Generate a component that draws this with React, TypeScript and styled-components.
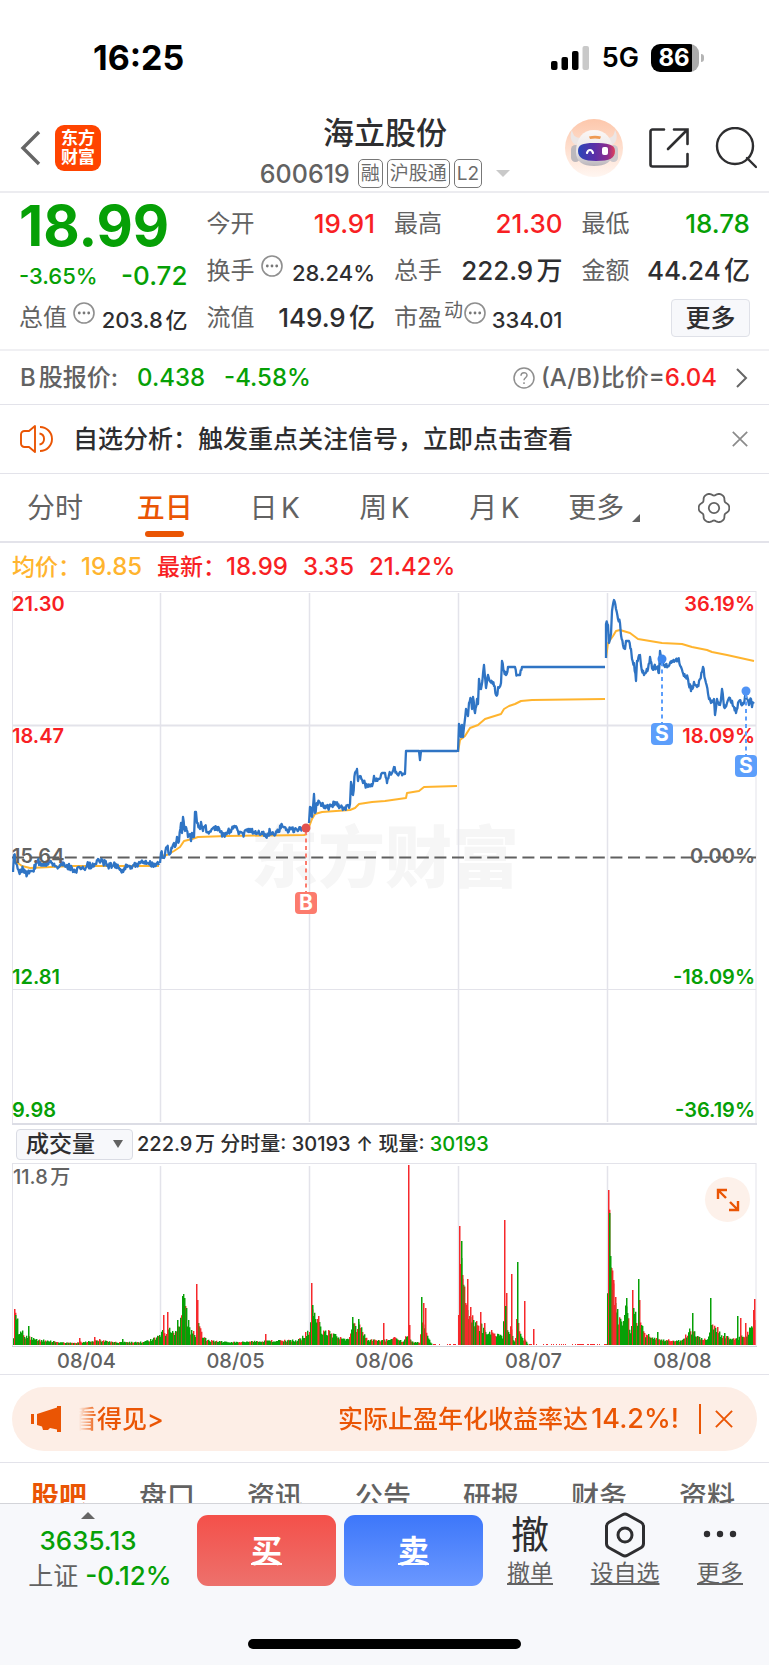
import React from "react";
import styled, { createGlobalStyle, css } from "styled-components";

const UP = "#f81f24";
const DOWN = "#06a006";
const BRAND = "#ea5504";
const AVG = "#ffb42e";
const LINE = "#2f74c4";
const INK = "#2e2e30";
const MUTED = "#626262";
const RULE = "#e3e3ea";

const GlobalStyle = createGlobalStyle`
  *, *::before, *::after { box-sizing: border-box; }
  body {
    margin: 0;
    background: #fff;
    color: ${INK};
    font-family: Inter, "Noto Sans CJK SC", sans-serif;
    font-weight: 500;
    text-autospace: normal;
  }
  button, select {
    margin: 0;
    padding: 0;
    border: 0;
    background: none;
    color: inherit;
    font: inherit;
    cursor: pointer;
    text-autospace: normal;
  }
  a { color: inherit; }
  svg { display: block; flex: none; }
`;

const Page = styled.div`
  display: flex;
  flex-direction: column;
  min-height: 100vh;
`;

/* ---------- status bar ---------- */

const StatusBar = styled.div`
  display: flex;
  align-items: center;
  justify-content: space-between;
  height: 104px;
  padding: 12px 65px 0 93px;
  color: #000;
`;

const Clock = styled.span`
  font-size: 34px;
  line-height: 40px;
  font-weight: 700;
`;

const StatusIcons = styled.div`
  display: flex;
  align-items: center;
  gap: 12px;
  font-size: 27px;
  line-height: 32px;
  font-weight: 600;
`;

const BatteryBox = styled.span`
  display: flex;
  align-items: center;
  gap: 2px;
  &::after {
    content: "";
    width: 3px;
    height: 8px;
    border-radius: 0 3px 3px 0;
    background: #b4b4b4;
  }
`;

const BatteryBody = styled.span`
  width: 48px;
  height: 28px;
  padding-right: 2px;
  border-radius: 9px;
  background: linear-gradient(90deg, #000 86%, #ababab 86%);
  color: #fff;
  font-size: 24px;
  line-height: 28px;
  font-weight: 700;
  text-align: center;
`;

/* ---------- header ---------- */

const Header = styled.header`
  display: grid;
  grid-template-columns: 1fr auto 1fr;
  align-items: center;
  height: 89px;
  padding: 0 12px 0 13px;
  border-bottom: 2px solid #ececf0;
`;

const HeaderSide = styled.div<{ $end?: boolean }>`
  display: flex;
  align-items: center;
  gap: ${(p) => (p.$end ? 25 : 14)}px;
  padding-left: ${(p) => (p.$end ? 0 : 7)}px;
  justify-content: ${(p) => (p.$end ? "flex-end" : "flex-start")};
`;

const Logo = styled.span`
  display: grid;
  place-content: center;
  width: 46px;
  height: 46px;
  border-radius: 9px;
  background: #ff4400;
  color: #fff;
  font-size: 17px;
  line-height: 19px;
  font-weight: 700;
`;

const TitleBlock = styled.div`
  display: flex;
  flex-direction: column;
  align-items: center;
  gap: 5px;
  padding-top: 7px;
`;

const Title = styled.h1`
  margin: 0;
  font-size: 31px;
  line-height: 40px;
  font-weight: 500;
`;

const CodeRow = styled.div`
  display: flex;
  align-items: center;
  gap: 4px;
  height: 32px;
  color: ${MUTED};
  font-size: 25px;
`;

const Tag = styled.span`
  height: 29px;
  padding: 0 2px;
  border: 1px solid #777;
  border-radius: 5px;
  color: #6b6b6b;
  font-size: 19px;
  line-height: 27px;
  font-weight: 400;
`;

const CodeText = styled.span`
  margin-right: 4px;
`;

const Triangle = styled.span<{ $up?: boolean; $color: string; $size: number }>`
  display: block;
  width: 0;
  height: 0;
  border: ${(p) => p.$size}px solid transparent;
  ${(p) =>
    p.$up
      ? css`border-top: 0; border-bottom-color: ${p.$color};`
      : css`border-bottom: 0; border-top-color: ${p.$color};`}
`;

const CodeMenu = styled.button`
  padding-left: 10px;
`;

/* ---------- quote ---------- */

const Quote = styled.section`
  display: grid;
  grid-template-columns: repeat(4, 1fr);
  grid-auto-rows: 47px;
  column-gap: 19px;
  padding: 7px 19px 8px;
  border-bottom: 2px solid #f0f0f3;
`;

const Cell = styled.div`
  display: flex;
  align-items: center;
  justify-content: space-between;
  white-space: nowrap;
`;

const Price = styled.strong`
  padding-top: 5px;
  color: ${DOWN};
  font-size: 56px;
  line-height: 47px;
  font-weight: 700;
`;

const Label = styled.span`
  color: ${MUTED};
  font-size: 24px;
  line-height: 36px;
  font-weight: 400;
`;

const LabelGroup = styled.span`
  display: flex;
  align-items: center;
`;

const RaisedIcon = styled.span<{ $gap: number }>`
  padding: 0 0 10px ${(p) => p.$gap}px;
`;

const Mode = styled.span`
  padding: 0 0 14px 2px;
  color: ${MUTED};
  font-size: 19px;
  line-height: 24px;
  font-weight: 400;
`;

const Value = styled.span<{ $color?: string; $small?: boolean }>`
  color: ${(p) => p.$color ?? INK};
  font-size: ${(p) => (p.$small ? 22 : 26)}px;
  line-height: 32px;
  padding-top: ${(p) => (p.$small ? 4 : 0)}px;
`;

const ChangeCell = styled(Cell)`
  padding-top: 10px;
  ${Value} { padding-top: 0; }
`;

const MoreButton = styled.button`
  justify-self: end;
  align-self: center;
  width: 79px;
  height: 38px;
  border: 1px solid #dfe1e8;
  border-radius: 4px;
  background: #f7f8fb;
  font-size: 25px;
  line-height: 34px;
`;

/* ---------- B share and notice rows ---------- */

const Strip = styled.div<{ $height: number }>`
  display: flex;
  align-items: center;
  height: ${(p) => p.$height}px;
  padding: 0 21px 0 20px;
  border-bottom: 1px solid ${RULE};
  white-space: nowrap;
`;

const Tone = styled.span<{ $color: string; $weight?: number }>`
  color: ${(p) => p.$color};
  font-weight: ${(p) => p.$weight ?? 500};
`;

const BShare = styled(Strip)`
  gap: 19px;
  color: ${MUTED};
  font-size: 24px;
  line-height: 32px;
`;

const Ratio = styled.a`
  display: flex;
  align-items: center;
  margin-left: auto;
  text-decoration: none;
`;

const RatioText = styled.span`
  margin: 0 19px 0 6px;
`;

const NoticeText = styled.p`
  flex: 1;
  margin: 0 0 0 20px;
  font-size: 25px;
  line-height: 36px;
`;

/* ---------- period tabs ---------- */

const Tabs = styled.nav`
  display: grid;
  grid-template-columns: repeat(7, 1fr);
  height: 69px;
  border-bottom: 2px solid ${RULE};
`;

const Tab = styled.button<{ $active?: boolean }>`
  position: relative;
  display: flex;
  align-items: center;
  justify-content: center;
  color: ${(p) => (p.$active ? BRAND : MUTED)};
  font-size: 28px;
  line-height: 40px;
  font-weight: ${(p) => (p.$active ? 500 : 400)};
  &::after {
    content: ${(p) => (p.$active ? '""' : "none")};
    position: absolute;
    bottom: 4px;
    width: 39px;
    height: 6px;
    border-radius: 3px;
    background: ${BRAND};
  }
`;

const Corner = styled.svg`
  align-self: flex-end;
  margin: 0 0 19px 8px;
`;

/* ---------- charts ---------- */

const Readout = styled.div`
  display: flex;
  align-items: center;
  gap: 15px;
  height: 48px;
  padding: 0 12px;
  color: ${UP};
  font-size: 23px;
  line-height: 32px;
  white-space: pre;
`;

const Num = styled.span`
  font-size: 24px;
`;

const ChartArea = styled.div`
  position: relative;
  padding: 0 12px;
`;

const ChartSvg = styled.svg`
  width: 100%;
  height: auto;
  font-family: Inter, "Noto Sans CJK SC", sans-serif;
`;

const VolumeBar = styled.div`
  display: flex;
  align-items: center;
  gap: 4px;
  height: 38px;
  padding: 0 16px;
  font-size: 20px;
  line-height: 28px;
  white-space: pre;
`;

const SelectBox = styled.label`
  position: relative;
  display: flex;
  align-items: center;
`;

const Select = styled.select`
  appearance: none;
  width: 117px;
  height: 31px;
  padding-left: 9px;
  border: 1px solid #dadce4;
  border-radius: 4px;
  background: #f7f8fb;
  font-size: 23px;
  line-height: 29px;
`;

const SelectArrow = styled.svg`
  position: absolute;
  right: 10px;
  pointer-events: none;
`;

const ExpandButton = styled.button`
  position: absolute;
  top: 14px;
  right: 19px;
  display: grid;
  place-items: center;
  width: 45px;
  height: 45px;
  border-radius: 50%;
  background: #fdf1ea;
`;

const Dates = styled.div`
  display: grid;
  grid-template-columns: repeat(5, 1fr);
  height: 28px;
  padding: 0 12px;
  border-bottom: 1px solid ${RULE};
  color: ${MUTED};
  font-size: 20px;
  line-height: 28px;
  text-align: center;
`;

/* ---------- promo ---------- */

const PromoWrap = styled.div`
  padding: 12px 12px 11px;
  border-bottom: 1px solid ${RULE};
`;

const Promo = styled.div`
  display: flex;
  align-items: center;
  height: 64px;
  padding: 0 24px 0 19px;
  border-radius: 32px;
  background: #fdeee6;
  color: ${BRAND};
  font-size: 25px;
  line-height: 36px;
`;

const Marquee = styled.div`
  display: flex;
  flex: 1;
  align-items: center;
  justify-content: space-between;
  margin: 0 20px 0 18px;
  overflow: hidden;
  white-space: nowrap;
  mask-image: linear-gradient(90deg, transparent, #000 18px);
`;

const Tail = styled.span`
  margin-left: -7px;
`;

const Rate = styled.span`
  font-size: 27px;
`;

const PromoClose = styled.button`
  display: flex;
  align-items: center;
  height: 30px;
  padding-left: 14px;
  border-left: 2px solid ${BRAND};
`;

/* ---------- section tabs ---------- */

const SectionTabs = styled.nav`
  display: grid;
  grid-template-columns: repeat(7, 1fr);
  height: 40px;
  padding: 0 8px 0 5px;
  overflow: hidden;
`;

const SectionTab = styled.button<{ $active?: boolean }>`
  height: 68px;
  color: ${(p) => (p.$active ? BRAND : MUTED)};
  font-size: 28px;
  line-height: 68px;
  font-weight: ${(p) => (p.$active ? 700 : 500)};
`;

/* ---------- bottom bar ---------- */

const Footer = styled.footer`
  flex: 1;
  display: flex;
  flex-direction: column;
  justify-content: space-between;
  border-top: 1px solid #d3d4d9;
  background: #f7f8fb;
`;

const Actions = styled.div`
  display: flex;
  align-items: flex-start;
  gap: 8px;
  padding: 8px 10px 0 21px;
`;

const IndexBox = styled.button`
  flex: none;
  display: flex;
  flex-direction: column;
  align-items: center;
  width: 168px;
  padding-right: 10px;
  color: ${MUTED};
  font-size: 25px;
  line-height: 35px;
  white-space: pre;
`;

const IndexName = styled.span`
  font-weight: 400;
`;

const IndexNum = styled(Tone)`
  font-size: 26px;
`;

const IndexValue = styled(IndexNum)`
  padding-top: 4px;
  margin-right: 24px;
`;

const IndexCaret = styled(Triangle)`
  margin-right: 24px;
`;

const Trade = styled.button<{ $from: string; $to: string }>`
  flex: 1;
  height: 71px;
  margin-top: 3px;
  border-radius: 11px;
  background: linear-gradient(${(p) => p.$from}, ${(p) => p.$to});
  color: #fff;
  font-size: 31px;
  line-height: 71px;
  font-weight: 700;
  text-decoration: underline;
  text-decoration-thickness: 2px;
`;

const Tool = styled.button<{ $width: number }>`
  flex: none;
  display: flex;
  flex-direction: column;
  align-items: center;
  width: ${(p) => p.$width}px;
  color: ${MUTED};
  font-size: 23px;
  line-height: 34px;
  font-weight: 400;
`;

const ToolIcon = styled.span`
  display: grid;
  place-items: center;
  height: 44px;
  color: ${INK};
  font-size: 38px;
  line-height: 44px;
`;

const ToolLabel = styled.span`
  text-decoration: underline;
`;

const HomeIndicator = styled.div`
  align-self: center;
  width: 35.5%;
  height: 10px;
  margin-bottom: 16px;
  border-radius: 5px;
  background: #000;
`;

/* ---------- chart data ---------- */

type Pt = [number, number];

const priceDays: Pt[][] = [
  [[1, 281], [2, 264], [5, 274], [7, 281], [11, 278], [15, 284], [18, 280], [21, 280], [25, 270], [30, 273], [38, 271], [45, 276], [50, 273], [60, 277], [61, 281], [68, 277], [73, 279], [75, 274], [80, 275], [86, 268], [91, 271], [96, 275], [105, 274], [109, 280], [115, 276], [125, 273], [131, 272], [147, 274]],
  [[148, 272], [149, 262], [152, 267], [155, 256], [158, 263], [162, 252], [163, 256], [165, 246], [167, 250], [169, 232], [170, 242], [171, 226], [173, 240], [174, 236], [176, 246], [178, 243], [179, 250], [180, 242], [182, 246], [183, 221], [184, 221], [185, 232], [188, 238], [189, 231], [191, 240], [193, 236], [196, 241], [200, 238], [205, 236], [208, 241], [212, 244], [216, 240], [219, 241], [222, 235], [226, 240], [232, 243], [238, 238], [242, 241], [246, 242], [250, 241], [254, 246], [258, 240], [262, 244], [266, 241], [270, 234], [274, 239], [280, 238], [286, 240], [290, 237], [294, 237]],
  [[297, 232], [298, 216], [300, 226], [302, 203], [303, 222], [305, 212], [310, 214], [316, 217], [320, 214], [323, 211], [328, 216], [333, 218], [338, 213], [339, 191], [341, 204], [343, 182], [345, 178], [346, 190], [348, 185], [351, 192], [353, 193], [356, 196], [358, 194], [361, 192], [362, 185], [364, 190], [367, 188], [370, 182], [373, 182], [375, 192], [377, 184], [380, 182], [382, 176], [385, 183], [388, 181], [393, 183], [394, 160], [407, 160], [408, 169], [409, 160], [445, 160]],
  [[446, 161], [447, 133], [449, 146], [450, 134], [451, 146], [452, 136], [454, 118], [456, 125], [457, 112], [459, 108], [460, 118], [461, 106], [463, 122], [465, 108], [466, 113], [467, 88], [469, 98], [472, 74], [474, 97], [476, 84], [480, 91], [482, 95], [484, 104], [487, 97], [489, 92], [490, 70], [492, 80], [494, 84], [496, 76], [503, 76], [505, 84], [508, 84], [510, 76], [593, 76]],
  [[594, 67], [594, 33], [596, 34], [597, 52], [599, 43], [600, 20], [602, 9], [604, 18], [606, 28], [608, 32], [609, 44], [611, 54], [613, 58], [614, 50], [617, 50], [619, 58], [620, 68], [622, 72], [624, 90], [625, 70], [628, 64], [629, 74], [632, 84], [636, 78], [638, 66], [640, 77], [645, 76], [647, 82], [648, 60], [650, 74], [653, 76], [658, 72], [663, 70], [666, 68], [669, 76], [673, 86], [676, 88], [679, 100], [682, 91], [685, 96], [688, 88], [691, 76], [694, 92], [697, 108], [699, 112], [702, 108], [703, 124], [705, 108], [708, 114], [710, 98], [712, 116], [715, 112], [718, 107], [722, 116], [724, 122], [727, 110], [731, 112], [734, 104], [737, 114], [739, 108], [740, 116], [742, 111]],
];

const averageDays: Pt[][] = [
  [[3, 270], [10, 275], [18, 277], [60, 275], [147, 275]],
  [[149, 265], [155, 264], [162, 260], [168, 256], [172, 250], [180, 248], [186, 246], [215, 245], [292, 244], [295, 243]],
  [[297, 236], [300, 228], [303, 223], [310, 221], [338, 219], [343, 217], [347, 213], [360, 211], [373, 210], [394, 207], [395, 202], [407, 200], [412, 196], [445, 195]],
  [[446, 161], [448, 149], [453, 145], [458, 137], [466, 134], [473, 128], [489, 123], [492, 118], [497, 115], [503, 113], [509, 110], [520, 109], [593, 108]],
  [[594, 67], [596, 52], [601, 45], [604, 40], [608, 39], [618, 42], [626, 48], [650, 52], [670, 53], [680, 56], [695, 59], [700, 61], [715, 64], [742, 70]],
];

function makeRandom(seed: number) {
  let s = seed;
  return () => {
    s = (s * 16807) % 2147483647;
    return s / 2147483647;
  };
}

function join(points: Pt[]) {
  return points.map(([x, y]) => `${x.toFixed(1)},${y.toFixed(1)}`).join(" ");
}

/* Adds minute-by-minute movement between the turning points; flat runs stay flat. */
function withTicks(points: Pt[], seed: number): Pt[] {
  const random = makeRandom(seed);
  const out: Pt[] = [points[0]];
  for (let i = 1; i < points.length; i++) {
    const [x0, y0] = points[i - 1];
    const [x1, y1] = points[i];
    if (y0 !== y1) {
      for (let x = x0 + 0.7; x < x1 - 0.3; x += 0.7) {
        const t = (x - x0) / (x1 - x0);
        out.push([x, y0 + (y1 - y0) * t + (random() - 0.5) * 6]);
      }
    }
    out.push([x1, y1]);
  }
  return out;
}

const volumeEnvelope: Pt[] = [
  [1, 10], [2, 35], [5, 28], [6, 14], [9, 16], [12, 8], [15, 9], [20, 7], [30, 5], [45, 3], [60, 2], [85, 5], [100, 3], [130, 3], [143, 7], [147, 14],
  [148, 12], [150, 22], [152, 14], [155, 14], [158, 17], [162, 12], [167, 22], [170, 32], [171, 46], [173, 44], [175, 28], [178, 15], [182, 12], [184, 12], [186, 22], [189, 12], [194, 5], [215, 3], [250, 4], [285, 5], [290, 8], [296, 15],
  [297, 16], [300, 42], [303, 32], [306, 24], [309, 16], [316, 13], [322, 10], [330, 6], [337, 7], [341, 28], [344, 15], [347, 26], [350, 12], [356, 5], [373, 5], [380, 8], [390, 4], [395, 10], [400, 3], [407, 3], [410, 26], [413, 15], [418, 3], [420, 0], [445, 0],
  [446, 30], [449, 95], [451, 66], [453, 42], [456, 28], [460, 32], [463, 26], [468, 20], [472, 16], [478, 14], [482, 12], [490, 8], [492, 34], [495, 16], [498, 17], [502, 4], [506, 22], [510, 8], [514, 3], [516, 0], [594, 0],
  [595, 45], [597, 120], [598, 94], [600, 66], [602, 44], [604, 50], [606, 30], [610, 24], [614, 38], [618, 14], [622, 34], [626, 20], [628, 28], [632, 12], [640, 8], [650, 5], [668, 5], [678, 16], [685, 9], [695, 7], [700, 20], [705, 13], [715, 8], [725, 7], [735, 12], [743, 28],
];

const volumeSpikes: [number, number, "u" | "d"][] = [
  [2, 36, "u"], [3, 30, "d"], [16, 19, "d"], [67, 7, "u"], [82, 8, "u"], [87, 6, "u"], [110, 6, "d"],
  [151, 30, "u"], [155, 33, "u"], [165, 25, "d"], [170, 49, "d"], [172, 47, "d"], [184, 61, "u"], [185, 45, "u"], [253, 11, "u"],
  [299, 62, "u"], [300, 40, "d"], [306, 29, "u"], [316, 15, "u"], [340, 28, "d"], [346, 26, "d"], [371, 22, "u"],
  [396, 180, "u"], [397, 20, "u"], [409, 48, "d"], [411, 42, "u"], [413, 37, "u"],
  [447, 119, "u"], [449, 104, "d"], [450, 70, "u"], [453, 42, "u"], [455, 66, "u"], [458, 38, "u"], [468, 33, "u"], [472, 22, "u"],
  [492, 125, "u"], [493, 39, "d"], [494, 52, "u"], [499, 71, "u"], [504, 26, "u"], [505, 83, "d"], [512, 44, "u"], [521, 16, "u"],
  [596, 155, "u"], [597, 132, "d"], [598, 89, "d"], [599, 77, "u"], [601, 65, "u"], [603, 48, "u"], [614, 47, "d"], [620, 55, "u"],
  [621, 37, "d"], [626, 66, "d"], [627, 45, "u"], [645, 13, "d"], [680, 32, "d"], [698, 47, "d"], [705, 18, "u"], [712, 12, "d"],
  [725, 29, "d"], [728, 27, "u"], [733, 22, "u"], [741, 35, "u"], [742, 46, "u"],
];

/* Bars are slightly wider than their step so that neighbours touch; spikes go on top. */
function volumePaths() {
  const random = makeRandom(4217);
  const paths = { u: "", d: "", spikeU: "", spikeD: "" };
  const base = 182;
  let i = 1;
  for (let x = 1; x <= 742; x++) {
    while (i < volumeEnvelope.length - 1 && volumeEnvelope[i][0] < x) i++;
    const [x0, h0] = volumeEnvelope[i - 1];
    const [x1, h1] = volumeEnvelope[i];
    const level = h0 + ((h1 - h0) * (x - x0)) / (x1 - x0 || 1);
    const roll = random();
    const side = random() < 0.36 ? "u" : "d";
    if (level < 0.5) {
      if (roll < 0.4) paths.u += `M${x} ${base}v-1h1v1z`;
      continue;
    }
    const height = Math.max(1, level * (0.65 + roll * 0.5)).toFixed(1);
    paths[side] += `M${x} ${base}v-${height}h1.4v${height}z`;
  }
  for (const [x, h, side] of volumeSpikes) {
    paths[side === "u" ? "spikeU" : "spikeD"] += `M${x} ${base}v-${h}h1.5v${h}z`;
  }
  return paths;
}

const volume = volumePaths();
const dividers = [148, 297, 446, 595];

/* ---------- small drawings ---------- */

function gearOutline() {
  const points: Pt[] = [];
  for (let i = 0; i < 120; i++) {
    const a = (i / 120) * Math.PI * 2;
    const wave = Math.cos(6 * a);
    const r = 13.6 + 1.3 * wave - 0.5 * wave * wave;
    points.push([16 + r * 1.06 * Math.cos(a), 16 + r * 1.06 * Math.sin(a)]);
  }
  return join(points);
}

const MoreDots = () => (
  <svg width="22" height="22" viewBox="0 0 22 22" fill="none" stroke="#8f8f8f" strokeWidth="1.6">
    <circle cx="11" cy="11" r="10" />
    <g fill="#777" stroke="none">
      <circle cx="6.3" cy="11" r="1.4" />
      <circle cx="11" cy="11" r="1.4" />
      <circle cx="15.7" cy="11" r="1.4" />
    </g>
  </svg>
);

const Cross = ({ size, color }: { size: number; color: string }) => (
  <svg width={size} height={size} viewBox="0 0 16 16" stroke={color} strokeWidth="1.7" fill="none">
    <path d="M.8.8 15.2 15.2M15.2.8.8 15.2" />
  </svg>
);

const Robot = () => (
  <svg width="58" height="58" viewBox="0 0 58 58">
    <defs>
      <linearGradient id="robotBack" x1="0" y1="0" x2="0" y2="1">
        <stop offset="0" stopColor="#fdc7ab" />
        <stop offset="1" stopColor="#fff6f1" />
      </linearGradient>
      <linearGradient id="robotShell" x1="0" y1="0" x2="0" y2="1">
        <stop offset="0" stopColor="#fbf7f5" />
        <stop offset=".6" stopColor="#eae6e7" />
        <stop offset="1" stopColor="#b9b4ba" />
      </linearGradient>
      <linearGradient id="robotFace" x1="0" y1="0" x2="1" y2="0">
        <stop offset="0" stopColor="#2a46b8" />
        <stop offset=".45" stopColor="#5a2fa8" />
        <stop offset=".8" stopColor="#8b2d8e" />
        <stop offset="1" stopColor="#e2405a" />
      </linearGradient>
    </defs>
    <circle cx="29" cy="29" r="29" fill="url(#robotBack)" />
    <path d="M7 11c1 5 3 8 9 8l-5 7c-5-2-7-10-4-15zM50 11c-1 5-2 8-8 8l5 7c5-2 6-10 3-15z" fill="#ece6e5" />
    <rect x="6" y="26" width="9" height="17" rx="4.5" fill="#bdb9bd" />
    <rect x="44" y="26" width="9" height="17" rx="4.5" fill="#cdc9cd" />
    <path d="M11 33c0-14 7-22 18-22s19 8 19 22c0 10-8 14-19 14s-18-4-18-14z" fill="url(#robotShell)" />
    <path d="M24 17.5q6-1.5 12 0l-1 2.5q-5-1-10 0z" fill="#ee9a52" />
    <path d="M13 32c0-6 4-8 16-8 13 0 21 1 21 8s-5 10-19 10c-12 0-18-3-18-10z" fill="url(#robotFace)" />
    <path d="M22 34c1-4 5-4 6 0" fill="none" stroke="#fff" strokeWidth="2.2" strokeLinecap="round" />
    <rect x="37" y="28" width="6" height="8" rx="2" fill="#fff" />
  </svg>
);

const Badge = ({ x, y, color, dot, mark }: { x: number; y: number; color: string; dot: string; mark: string }) => (
  <g>
    <path d={`M${x} ${y + 3}v61`} stroke={color} strokeWidth="2" strokeDasharray="4 3.5" />
    <circle cx={x} cy={y} r="4.5" fill={dot} />
    <rect x={x - 11} y={y + 64} width="22" height="22" rx="4" fill={color} />
    <text x={x} y={y + 82} textAnchor="middle" fill="#fff" fontSize="21" fontWeight="700">
      {mark}
    </text>
  </g>
);

const axisLabels: [number, string, string, string][] = [
  [20, "21.30", "36.19%", UP],
  [152, "18.47", "18.09%", UP],
  [272, "15.64", "0.00%", MUTED],
  [393, "12.81", "-18.09%", DOWN],
  [526, "9.98", "-36.19%", DOWN],
];

const PriceChart = () => (
  <ChartSvg viewBox="0 0 745 534" role="img" aria-label="五日走势">
    <text x="373" y="291" textAnchor="middle" fill="#f6f6f6" fontSize="67" fontWeight="900">
      东方财富
    </text>
    <g stroke={RULE} fill="none">
      <path d="M0 .5H744" />
      <path d="M.5 0V533M744 0V533" />
      <path d="M0 134.5H744" strokeWidth="2" />
      <path d="M0 398.5H744" />
      <path d="M0 533H745" strokeWidth="2" stroke="#dcdde5" />
      {dividers.map((x) => (
        <path key={x} d={`M${x + 0.5} 2V531`} strokeWidth="1.5" />
      ))}
    </g>
    <path d="M0 266.5H744" stroke="#606060" strokeWidth="2" strokeDasharray="12 5.6" />
    <g fill="none" stroke={AVG} strokeWidth="2" strokeLinejoin="round">
      {averageDays.map((day, i) => (
        <polyline key={i} points={join(day)} />
      ))}
    </g>
    <g fill="none" stroke={LINE} strokeWidth="2.3" strokeLinejoin="round">
      {priceDays.map((day, i) => (
        <polyline key={i} points={join(withTicks(day, 91 + i * 37))} />
      ))}
    </g>
    <g fontSize="20" fontWeight="600">
      {axisLabels.map(([y, left, right, color]) => (
        <g key={y} fill={color}>
          <text x="0" y={y}>{left}</text>
          <text x="743" y={y} textAnchor="end">{right}</text>
        </g>
      ))}
    </g>
    <Badge x={294} y={237} color="#fc7b6d" dot="#e2524d" mark="B" />
    <Badge x={650} y={68} color="#5c9efb" dot="#3d86ee" mark="S" />
    <Badge x={734} y={100} color="#5c9efb" dot="#4f93f5" mark="S" />
  </ChartSvg>
);

const VolumeChart = () => (
  <ChartSvg viewBox="0 0 745 184" role="img" aria-label="成交量">
    <g stroke={RULE} fill="none">
      <path d="M0 .5H744" />
      <path d="M.5 0V183M744 0V183" />
      <path d="M0 183.5H745" stroke="#cfd0d8" />
      {dividers.map((x) => (
        <path key={x} d={`M${x + 0.5} 3V182`} strokeWidth="1.5" />
      ))}
    </g>
    <path d={volume.u} fill="#f6292c" />
    <path d={volume.d} fill="#06a006" />
    <path d={volume.spikeU} fill="#f6292c" />
    <path d={volume.spikeD} fill="#06a006" />
    <text x="1" y="21" fill={MUTED} fontSize="20" fontWeight="500">11.8万</text>
  </ChartSvg>
);

/* ---------- page ---------- */

export default function App() {
  return (
    <Page>
      <GlobalStyle />
      <StatusBar>
        <Clock>16:25</Clock>
        <StatusIcons>
          <svg width="39" height="26" viewBox="0 0 39 26">
            <rect x="0" y="16" width="6.5" height="9" rx="2" />
            <rect x="10.5" y="12" width="6.5" height="13" rx="2" />
            <rect x="21" y="6" width="6.5" height="19" rx="2" />
            <rect x="31.5" y="1" width="6.5" height="24" rx="2" fill="#c9c9c9" />
          </svg>
          <span>5G</span>
          <BatteryBox>
            <BatteryBody>86</BatteryBody>
          </BatteryBox>
        </StatusIcons>
      </StatusBar>

      <Header>
        <HeaderSide>
          <button aria-label="返回">
            <svg width="21" height="36" viewBox="0 0 21 36" fill="none" stroke="#666" strokeWidth="3.4">
              <path d="M19 2 3 18l16 16" />
            </svg>
          </button>
          <Logo>
            <span>东方</span>
            <span>财富</span>
          </Logo>
        </HeaderSide>
        <TitleBlock>
          <Title>海立股份</Title>
          <CodeRow>
            <CodeText>600619</CodeText>
            <Tag>融</Tag>
            <Tag>沪股通</Tag>
            <Tag>L2</Tag>
            <CodeMenu aria-label="切换股票">
              <Triangle $color="#c9c9c9" $size={7} />
            </CodeMenu>
          </CodeRow>
        </TitleBlock>
        <HeaderSide $end>
          <button aria-label="助手">
            <Robot />
          </button>
          <button aria-label="分享">
            <svg width="42" height="42" viewBox="0 0 42 42" fill="none" stroke={INK} strokeWidth="2.6" strokeLinecap="round">
              <path d="M16 2.5H4.5a2 2 0 0 0-2 2v33a2 2 0 0 0 2 2h33a2 2 0 0 0 2-2V27" />
              <path d="M26 2.5h13.5V17M39 3 20 22" />
            </svg>
          </button>
          <button aria-label="搜索">
            <svg width="42" height="42" viewBox="0 0 42 42" fill="none" stroke={INK} strokeWidth="2.4" strokeLinecap="round">
              <circle cx="20" cy="19" r="18" />
              <path d="m32 31 9 9" />
            </svg>
          </button>
        </HeaderSide>
      </Header>

      <Quote>
        <Cell><Price>18.99</Price></Cell>
        <Cell><Label>今开</Label><Value $color={UP}>19.91</Value></Cell>
        <Cell><Label>最高</Label><Value $color={UP}>21.30</Value></Cell>
        <Cell><Label>最低</Label><Value $color={DOWN}>18.78</Value></Cell>

        <ChangeCell>
          <Value $color={DOWN} $small>-3.65%</Value>
          <Value $color={DOWN}>-0.72</Value>
        </ChangeCell>
        <Cell>
          <LabelGroup>
            <Label>换手</Label>
            <RaisedIcon $gap={6}><MoreDots /></RaisedIcon>
          </LabelGroup>
          <Value $small>28.24%</Value>
        </Cell>
        <Cell><Label>总手</Label><Value>222.9万</Value></Cell>
        <Cell><Label>金额</Label><Value>44.24亿</Value></Cell>

        <Cell>
          <LabelGroup>
            <Label>总值</Label>
            <RaisedIcon $gap={6}><MoreDots /></RaisedIcon>
          </LabelGroup>
          <Value $small>203.8亿</Value>
        </Cell>
        <Cell><Label>流值</Label><Value>149.9亿</Value></Cell>
        <Cell>
          <LabelGroup>
            <Label>市盈</Label>
            <Mode>动</Mode>
            <RaisedIcon $gap={1}><MoreDots /></RaisedIcon>
          </LabelGroup>
          <Value $small>334.01</Value>
        </Cell>
        <MoreButton>更多</MoreButton>
      </Quote>

      <BShare $height={54}>
        <span>B股报价:</span>
        <Tone $color={DOWN}>0.438</Tone>
        <Tone $color={DOWN}>-4.58%</Tone>
        <Ratio href="#ratio">
          <svg width="22" height="22" viewBox="0 0 22 22" fill="none" stroke="#8f8f8f" strokeWidth="1.5">
            <circle cx="11" cy="11" r="10" />
            <path d="M8 8.7c0-4 6-4 6-.4 0 2.4-3 2.5-3 5M11 15.2v1.8" />
          </svg>
          <RatioText>
            (A/B)比价=<Tone $color={UP}>6.04</Tone>
          </RatioText>
          <svg width="12" height="20" viewBox="0 0 12 20" fill="none" stroke="#666" strokeWidth="2">
            <path d="m1 1 9 9-9 9" />
          </svg>
        </Ratio>
      </BShare>

      <Strip $height={69}>
        <svg width="33" height="28" viewBox="0 0 33 28" fill="none" stroke={BRAND} strokeWidth="1.9" strokeLinejoin="round">
          <path d="M15 1v26l-6-5H4.5A3.5 3.5 0 0 1 1 18.500v-9A3.5 3.5 0 0 1 4.500 6H9z" />
          <path d="M19.5 8.500a5.600 5.600 0 0 1 0 11M20 2a12 12 0 0 1 0 24" />
        </svg>
        <NoticeText>自选分析：触发重点关注信号，立即点击查看</NoticeText>
        <button aria-label="关闭"><Cross size={16} color="#8b8b8b" /></button>
      </Strip>

      <Tabs>
        <Tab>分时</Tab>
        <Tab $active>五日</Tab>
        <Tab>日K</Tab>
        <Tab>周K</Tab>
        <Tab>月K</Tab>
        <Tab>
          更多
          <Corner width="8" height="8" viewBox="0 0 8 8"><path d="M8 0v8H0z" fill={MUTED} /></Corner>
        </Tab>
        <Tab aria-label="设置">
          <svg width="32" height="32" viewBox="0 0 32 32" fill="none" stroke={MUTED} strokeWidth="1.8" strokeLinejoin="round">
            <polygon points={gearOutline()} />
            <circle cx="16" cy="16" r="5.2" />
          </svg>
        </Tab>
      </Tabs>

      <Readout>
        <Tone $color={AVG}>均价：<Num>19.85</Num></Tone>
        <span>最新：<Num>18.99</Num></span>
        <Num>3.35</Num>
        <Num>21.42%</Num>
      </Readout>

      <ChartArea>
        <PriceChart />
      </ChartArea>

      <VolumeBar>
        <SelectBox>
          <Select aria-label="指标" defaultValue="vol">
            <option value="vol">成交量</option>
          </Select>
          <SelectArrow width="10" height="8" viewBox="0 0 10 8"><path d="M0 0h10L5 8z" fill={MUTED} /></SelectArrow>
        </SelectBox>
        <span>
          222.9万 分时量: 30193 ↑ 现量: <Tone $color={DOWN}>30193</Tone>
        </span>
      </VolumeBar>

      <ChartArea>
        <VolumeChart />
        <ExpandButton aria-label="放大">
          <svg width="24" height="24" viewBox="0 0 24 24" fill="none" stroke={BRAND} strokeWidth="2.4">
            <path d="M11 2H2v9M2 2l8 8M13 22h9v-9M22 22l-8-8" />
          </svg>
        </ExpandButton>
      </ChartArea>

      <Dates>
        {["08/04", "08/05", "08/06", "08/07", "08/08"].map((d) => (
          <span key={d}>{d}</span>
        ))}
      </Dates>

      <PromoWrap>
        <Promo>
          <svg width="30" height="26" viewBox="0 0 30 26" fill={BRAND}>
            <path d="M0 8h3v10H0zM6 8l20-6.500V0h4v26h-4v-2.500L19 22l-2 2h-5l-1-3.500L6 19z" />
          </svg>
          <Marquee>
            <Tail>看得见&gt;</Tail>
            <span>实际止盈年化收益率达<Rate>14.2%!</Rate></span>
          </Marquee>
          <PromoClose aria-label="关闭广告"><Cross size={18} color={BRAND} /></PromoClose>
        </Promo>
      </PromoWrap>

      <SectionTabs>
        {["股吧", "盘口", "资讯", "公告", "研报", "财务", "资料"].map((t, i) => (
          <SectionTab key={t} $active={i === 0}>{t}</SectionTab>
        ))}
      </SectionTabs>

      <Footer>
        <Actions>
          <IndexBox>
            <IndexCaret $up $color="#666" $size={7} />
            <IndexValue $color={DOWN}>3635.13</IndexValue>
            <IndexName>上证 <IndexNum $color={DOWN}>-0.12%</IndexNum></IndexName>
          </IndexBox>
          <Trade $from="#f4504a" $to="#ed716c">买</Trade>
          <Trade $from="#3d77fa" $to="#6b98ff">卖</Trade>
          <Tool $width={78}>
            <ToolIcon>撤</ToolIcon>
            <ToolLabel>撤单</ToolLabel>
          </Tool>
          <Tool $width={96}>
            <ToolIcon>
              <svg width="42" height="46" viewBox="0 0 42 46" fill="none" stroke={INK} strokeWidth="3">
                <path d="M18.5 2.7q2.5-1.4 5 0l13.5 7.5q2.5 1.4 2.5 4.3v17q0 2.9-2.5 4.3l-13.5 7.5q-2.5 1.4-5 0L5 35.8q-2.5-1.4-2.5-4.3v-17q0-2.9 2.5-4.3z" />
                <circle cx="21" cy="23" r="7" />
              </svg>
            </ToolIcon>
            <ToolLabel>设自选</ToolLabel>
          </Tool>
          <Tool $width={78}>
            <ToolIcon>
              <svg width="34" height="8" viewBox="0 0 34 8" fill={INK}>
                <circle cx="4" cy="4" r="3.2" />
                <circle cx="17" cy="4" r="3.2" />
                <circle cx="30" cy="4" r="3.2" />
              </svg>
            </ToolIcon>
            <ToolLabel>更多</ToolLabel>
          </Tool>
        </Actions>
        <HomeIndicator />
      </Footer>
    </Page>
  );
}
